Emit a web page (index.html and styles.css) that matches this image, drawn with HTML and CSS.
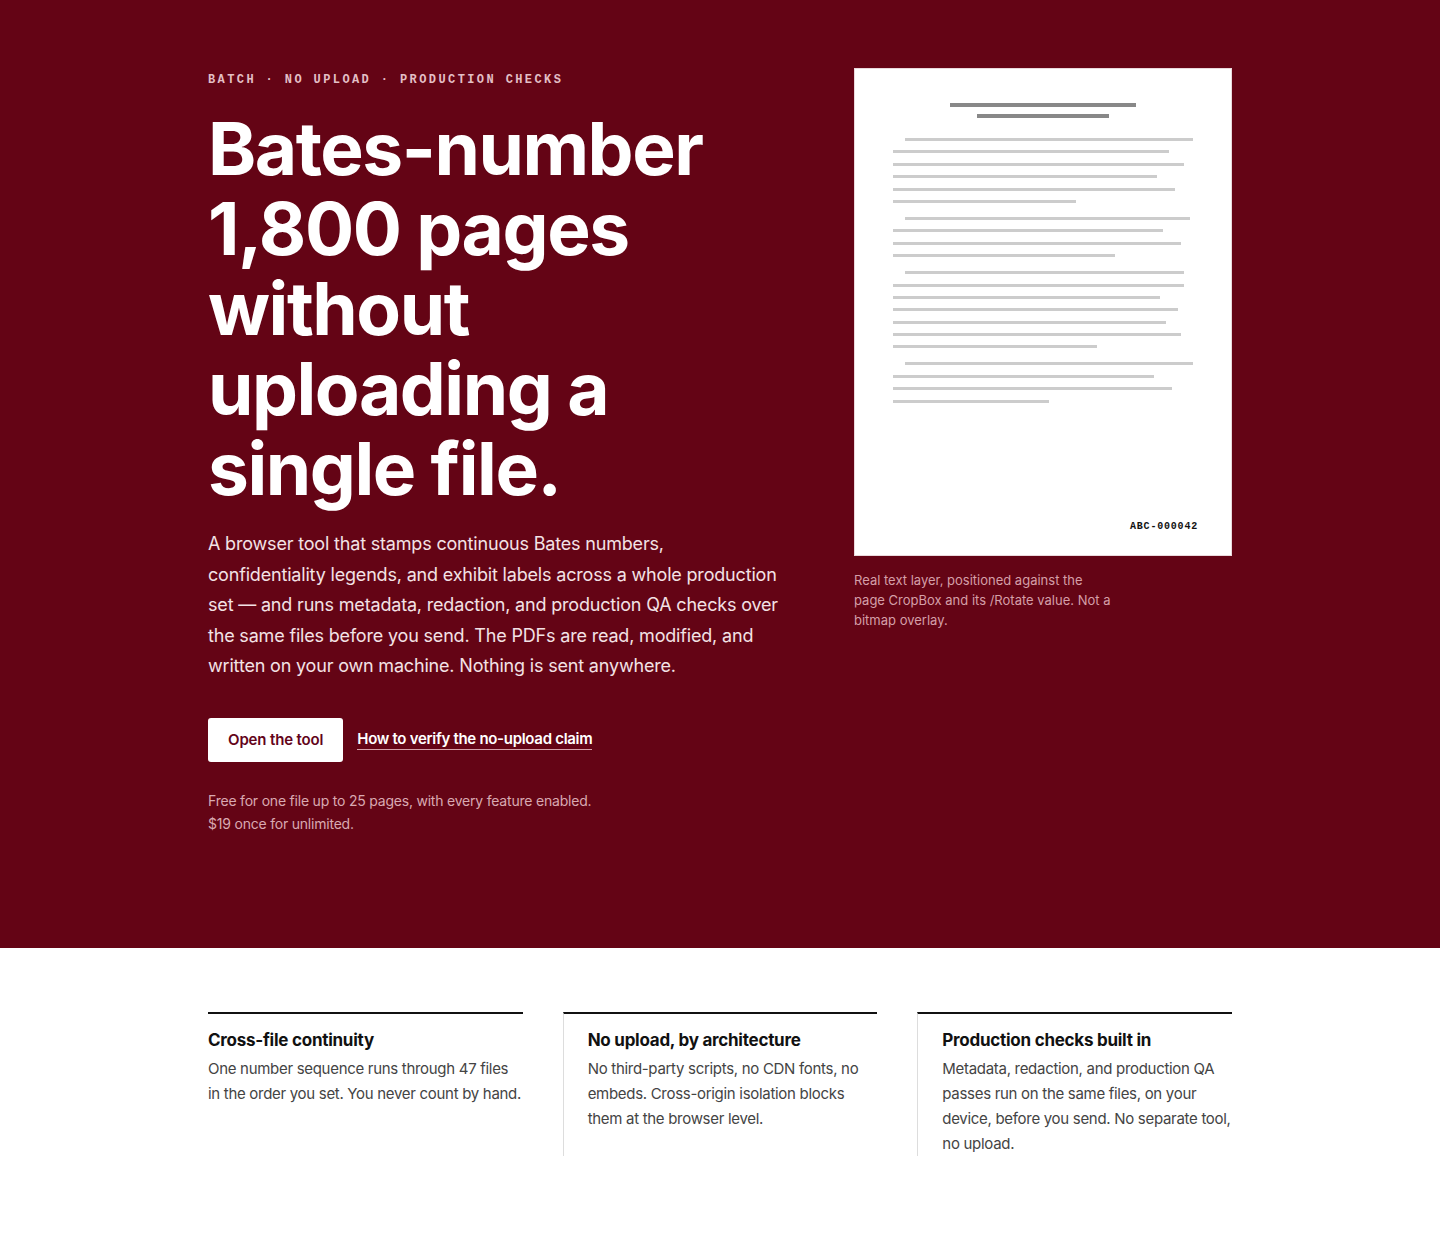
FILE: index.html
```html
<!DOCTYPE html>
<html lang="en">
<head>
<meta charset="utf-8">
<title>Bates-number 1,800 pages without uploading a single file.</title>
<link rel="stylesheet" href="styles.css">
</head>
<body>
<header class="hero">
  <div class="wrap hero-grid">
    <div class="hero-copy">
      <p class="eyebrow">BATCH · NO UPLOAD · PRODUCTION CHECKS</p>
      <h1 class="headline">Bates-number 1,800 pages without uploading a single file.</h1>
      <p class="lede">A browser tool that stamps continuous Bates numbers, confidentiality legends, and exhibit labels across a whole production set — and runs metadata, redaction, and production QA checks over the same files before you send. The PDFs are read, modified, and written on your own machine. Nothing is sent anywhere.</p>
      <div class="actions">
        <a class="btn" href="#">Open the tool</a>
        <a class="link" href="#">How to verify the no-upload claim</a>
      </div>
      <p class="pricing">Free for one file up to 25 pages, with every feature enabled.<br>$19 once for unlimited.</p>
    </div>
    <figure class="sample">
      <div class="page">
        <div class="page-title">
          <span class="bar bar-title" style="width:186px"></span>
          <span class="bar bar-title" style="width:132px"></span>
        </div>
        <div class="para">
          <span class="bar indent" style="width:288px"></span>
          <span class="bar" style="width:276px"></span>
          <span class="bar" style="width:291px"></span>
          <span class="bar" style="width:264px"></span>
          <span class="bar" style="width:282px"></span>
          <span class="bar" style="width:183px"></span>
        </div>
        <div class="para">
          <span class="bar indent" style="width:285px"></span>
          <span class="bar" style="width:270px"></span>
          <span class="bar" style="width:288px"></span>
          <span class="bar" style="width:222px"></span>
        </div>
        <div class="para">
          <span class="bar indent" style="width:279px"></span>
          <span class="bar" style="width:291px"></span>
          <span class="bar" style="width:267px"></span>
          <span class="bar" style="width:285px"></span>
          <span class="bar" style="width:273px"></span>
          <span class="bar" style="width:288px"></span>
          <span class="bar" style="width:204px"></span>
        </div>
        <div class="para">
          <span class="bar indent" style="width:288px"></span>
          <span class="bar" style="width:261px"></span>
          <span class="bar" style="width:279px"></span>
          <span class="bar" style="width:156px"></span>
        </div>
        <span class="stamp">ABC-000042</span>
      </div>
      <figcaption class="caption">Real text layer, positioned against the page CropBox and its /Rotate value. Not a bitmap overlay.</figcaption>
    </figure>
  </div>
</header>
<main class="features">
  <div class="wrap feature-grid">
    <section class="feature">
      <h2>Cross-file continuity</h2>
      <p>One number sequence runs through 47 files in the order you set. You never count by hand.</p>
    </section>
    <section class="feature">
      <h2>No upload, by architecture</h2>
      <p>No third-party scripts, no CDN fonts, no embeds. Cross-origin isolation blocks them at the browser level.</p>
    </section>
    <section class="feature">
      <h2>Production checks built in</h2>
      <p>Metadata, redaction, and production QA passes run on the same files, on your device, before you send. No separate tool, no upload.</p>
    </section>
  </div>
</main>
</body>
</html>
```

FILE: styles.css
```css
* { box-sizing: border-box; }
html, body { margin: 0; padding: 0; }
body {
  font-family: "Inter", "Noto Sans", "Liberation Sans", sans-serif;
  background: #ffffff;
  color: #111111;
}
.wrap {
  width: 1024px;
  margin: 0 auto;
}
.hero {
  background: #640415;
  color: #ffffff;
  padding: 70px 0 113px;
}
.hero-grid {
  display: grid;
  grid-template-columns: 582px 378px;
  column-gap: 64px;
  align-items: start;
}
.eyebrow {
  margin: 0;
  font-family: "Liberation Mono", "DejaVu Sans Mono", monospace;
  font-weight: 700;
  font-size: 12px;
  line-height: 20px;
  letter-spacing: 0.2em;
  color: #e3bfc5;
}
.headline {
  margin: 19px 0 20px;
  font-size: 73px;
  line-height: 80px;
  font-weight: 700;
  letter-spacing: -0.02em;
  color: #ffffff;
}
.lede {
  margin: 0;
  max-width: 578px;
  font-size: 18px;
  line-height: 30.6px;
  color: #f3e2e5;
  letter-spacing: -0.01em;
}
.actions {
  display: flex;
  align-items: center;
  gap: 14px;
  margin-top: 36px;
}
.btn {
  display: inline-flex;
  align-items: center;
  height: 44px;
  padding: 0 20px;
  background: #ffffff;
  color: #63041a;
  border-radius: 3px;
  font-size: 15px;
  font-weight: 600;
  letter-spacing: -0.01em;
  text-decoration: none;
}
.link {
  color: #ffffff;
  font-size: 15px;
  font-weight: 600;
  letter-spacing: -0.02em;
  text-decoration: none;
  border-bottom: 1px solid #d7a2ab;
  line-height: 20px;
}
.pricing {
  margin: 27px 0 0;
  font-size: 14px;
  line-height: 23px;
  letter-spacing: -0.015em;
  color: #d9a9b1;
}
.sample { margin: -2px 0 0; }
.page {
  position: relative;
  width: 378px;
  height: 488px;
  background: #ffffff;
  border: 1px solid #ead9dc;
  padding: 34px 38px 0;
  display: flex;
  flex-direction: column;
  gap: 12px;
}
.page-title {
  display: flex;
  flex-direction: column;
  align-items: center;
  gap: 7px;
  margin-bottom: 8px;
}
.para {
  display: flex;
  flex-direction: column;
  gap: 9.4px;
  margin-bottom: 2px;
}
.bar {
  display: block;
  height: 3px;
  background: #cccccc;
}
.bar-title {
  height: 4px;
  background: #888888;
}
.bar.indent { margin-left: 12px; }
.stamp {
  position: absolute;
  right: 33px;
  bottom: 23px;
  font-family: "Liberation Mono", "DejaVu Sans Mono", monospace;
  font-weight: 700;
  font-size: 10px;
  letter-spacing: 0.08em;
  color: #111111;
}
.caption {
  margin-top: 14px;
  max-width: 258px;
  font-size: 13px;
  line-height: 20px;
  color: #d59fa8;
}
.features {
  padding: 64px 0 84px;
}
.feature-grid {
  display: grid;
  grid-template-columns: repeat(3, 1fr);
  column-gap: 40px;
}
.feature {
  border-top: 2px solid #111111;
  padding-top: 14px;
}
.feature + .feature {
  border-left: 1px solid #dddddd;
  padding-left: 24px;
}
.feature h2 {
  margin: 0 0 4px;
  font-size: 17px;
  line-height: 24px;
  font-weight: 700;
  color: #111111;
  letter-spacing: -0.015em;
}
.feature p {
  margin: 0;
  font-size: 15px;
  line-height: 25px;
  letter-spacing: -0.02em;
  color: #444444;
}
```
